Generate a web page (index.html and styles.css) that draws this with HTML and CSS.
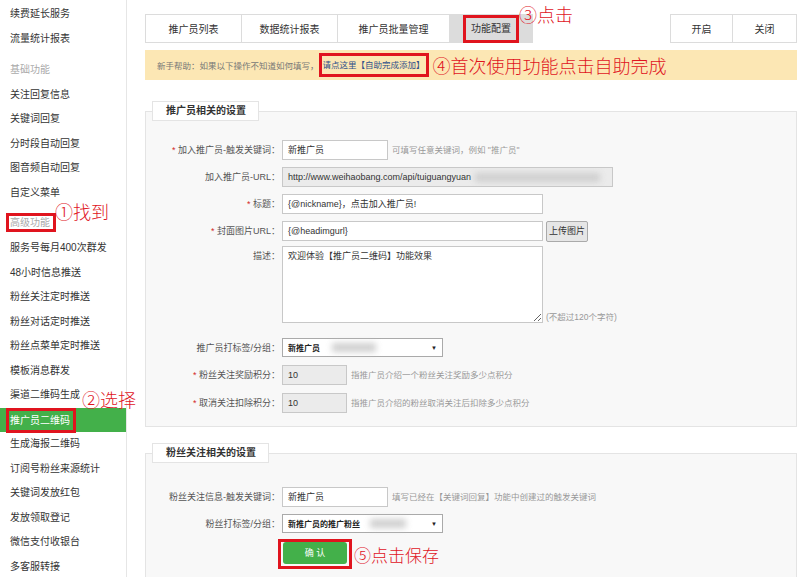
FILE: index.html
```html
<!DOCTYPE html>
<html>
<head>
  <meta charset="UTF-8">
  <title>推广员二维码 - 功能配置</title>
  <link rel="stylesheet" href="styles.css">
</head>
<body>
  <div class="page">
    <aside class="sidebar">
      <ul class="menu">
        <li>续费延长服务</li>
        <li>流量统计报表</li>
        <li class="group g1">基础功能</li>
        <li>关注回复信息</li>
        <li>关键词回复</li>
        <li>分时段自动回复</li>
        <li>图音频自动回复</li>
        <li>自定义菜单</li>
        <li class="group g2"><span class="mark mark-side">高级功能</span></li>
        <li class="g3">服务号每月400次群发</li>
        <li>48小时信息推送</li>
        <li>粉丝关注定时推送</li>
        <li>粉丝对话定时推送</li>
        <li>粉丝点菜单定时推送</li>
        <li>模板消息群发</li>
        <li>渠道二维码生成</li>
        <li class="active"><span class="mark mark-side">推广员二维码</span></li>
        <li>生成海报二维码</li>
        <li>订阅号粉丝来源统计</li>
        <li>关键词发放红包</li>
        <li>发放领取登记</li>
        <li>微信支付收银台</li>
        <li>多客服转接</li>
      </ul>
    </aside>

    <main class="main">
      <div class="topbar">
        <ul class="tabs">
          <li class="t1">推广员列表</li>
          <li class="t2">数据统计报表</li>
          <li class="t3">推广员批量管理</li>
          <li class="t4 on"><span class="mark mark-tab">功能配置</span></li>
        </ul>
        <div class="switch">
          <span class="sw sw-on">开启</span>
          <span class="sw sw-off">关闭</span>
        </div>
      </div>

      <div class="help">
        新手帮助：如果以下操作不知道如何填写，<a class="mark mark-link">请点这里【自助完成添加】</a>
        <span class="note">④首次使用功能点击自助完成</span>
      </div>

      <fieldset class="panel panel-a">
        <legend class="lg-a">推广员相关的设置</legend>
        <div class="row">
          <label><em>*</em> 加入推广员-触发关键词：</label>
          <div class="field w-s">新推广员</div>
          <span class="tip">可填写任意关键词，例如 "推广员"</span>
        </div>
        <div class="row">
          <label>加入推广员-URL：</label>
          <div class="field off w-l">http://www.weihaobang.com/api/tuiguangyuan<span class="blur blur-url"></span></div>
        </div>
        <div class="row">
          <label><em>*</em> 标题：</label>
          <div class="field w-m">{@nickname}，点击加入推广员!</div>
        </div>
        <div class="row r-upload">
          <label><em>*</em> 封面图片URL：</label>
          <div class="field w-m">{@headimgurl}</div>
          <span class="btn-up">上传图片</span>
        </div>
        <div class="row r-desc">
          <label>描述：</label>
          <textarea class="area">欢迎体验【推广员二维码】功能效果</textarea>
          <span class="tip tip-low">(不超过120个字符)</span>
        </div>
        <div class="row">
          <label>推广员打标签/分组：</label>
          <div class="pick"><b>新推广员</b><span class="blur blur-a"></span><i>▼</i></div>
        </div>
        <div class="row r-num">
          <label><em>*</em> 粉丝关注奖励积分：</label>
          <div class="field off w-n">10</div>
          <span class="tip">指推广员介绍一个粉丝关注奖励多少点积分</span>
        </div>
        <div class="row r-last">
          <label><em>*</em> 取消关注扣除积分：</label>
          <div class="field off w-n">10</div>
          <span class="tip">指推广员介绍的粉丝取消关注后扣除多少点积分</span>
        </div>
      </fieldset>

      <fieldset class="panel panel-b">
        <legend class="lg-b">粉丝关注相关的设置</legend>
        <div class="row">
          <label>粉丝关注信息-触发关键词：</label>
          <div class="field w-s">新推广员</div>
          <span class="tip">填写已经在【关键词回复】功能中创建过的触发关键词</span>
        </div>
        <div class="row r-tag">
          <label>粉丝打标签/分组：</label>
          <div class="pick"><b>新推广员的推广粉丝</b><span class="blur blur-b"></span><i>▼</i></div>
        </div>
        <div class="row r-save">
          <span class="mark mark-save"><span class="btn-ok">确 认</span></span>
          <span class="note note-save">⑤点击保存</span>
        </div>
      </fieldset>
    </main>

    <span class="ann ann-1">①找到</span>
    <span class="ann ann-2">②选择</span>
    <span class="ann ann-3">③点击</span>
  </div>
</body>
</html>
```

FILE: styles.css
```css
* { box-sizing: border-box; }
body { margin: 0; background: #fff; color: #333; font-family: "Liberation Sans", "Noto Sans CJK SC", sans-serif; }
.page { position: relative; display: flex; width: 800px; height: 577px; overflow: hidden; }

/* sidebar */
.sidebar { flex: none; width: 127px; padding-top: 2px; border-right: 1px solid #e6e6e6; }
.menu { list-style: none; margin: 0; padding: 0; }
.menu li { height: 24.5px; line-height: 24.5px; padding-left: 10px; font-size: 10px; color: #333; white-space: nowrap; }
.menu li.group { color: #aaa; }
.menu li.g1 { margin-top: 7px; }
.menu li.g2 { margin-top: 5px; }
.menu li.g3 { margin-top: 1.5px; }
.menu li.active { background: #43b04a; color: #fff; }
.mark { border: 3px solid #e0141e; }
.mark-side { display: inline-block; margin-left: -4px; padding: 0 3px 0 1px; line-height: 13px; vertical-align: middle; }
.menu li.active .mark-side { line-height: 19px; }

/* tabs */
.main { flex: 1; min-width: 0; padding: 14px 3px 0 18px; }
.topbar { display: flex; height: 29px; }
.tabs { display: flex; list-style: none; margin: 0; padding: 0; }
.tabs li { display: flex; align-items: center; justify-content: center; height: 29px; border: 1px solid #dcdcdc; border-left: none; background: #fff; font-size: 10px; color: #333; }
.tabs li.t1 { width: 97px; border-left: 1px solid #dcdcdc; }
.tabs li.t2 { width: 96px; }
.tabs li.t3 { width: 112px; }
.tabs li.t4 { width: 83px; }
.tabs li.on { background: #dcdcdc; }
.mark-tab { display: inline-block; width: 56px; height: 28px; line-height: 22px; text-align: center; }
.switch { display: flex; margin-left: auto; }
.sw { display: flex; align-items: center; justify-content: center; height: 29px; border: 1px solid #dcdcdc; font-size: 10px; }
.sw-on { width: 63px; }
.sw-off { width: 64px; border-left: none; }

/* help bar */
.help { display: flex; align-items: center; height: 30px; margin-top: 7px; padding-left: 12px; background: #fce7b4; font-size: 8.5px; color: #777; white-space: nowrap; }
.mark-link { display: inline-block; padding: 0 1px; line-height: 18px; color: #2f4f8a; }
.note { margin-left: 4px; font-family: "Noto Sans CJK SC", sans-serif; font-size: 18px; font-weight: 300; color: #e0141e; }

/* panels */
.panel { min-width: 0; margin: 21px 0 0; padding: 19px 0 13px; border: 1px solid #e4e4e4; background: #f8f8f8; }
.panel legend { height: 20px; margin-left: 6px; padding: 0 0 0 13px; border: 1px solid #e4e4e4; background: #fff; font-size: 10px; font-weight: bold; line-height: 18px; color: #333; white-space: nowrap; }
.lg-a { width: 107px; }
.lg-b { width: 117px; }
.panel-b { margin-top: 16px; padding-top: 24px; padding-bottom: 40px; }

.row { display: flex; align-items: flex-start; margin-bottom: 7px; }
.row label { flex: none; width: 134px; margin-right: 2px; font-size: 9px; line-height: 20px; text-align: right; color: #555; white-space: nowrap; }
.row label em { font-style: normal; color: #d42a2a; }
.r-upload { margin-bottom: 4px; }
.r-desc { margin-bottom: 15px; }
.r-num { margin-bottom: 8px; }
.r-last { margin-bottom: 0; }
.r-tag { margin-bottom: 5px; }

.field { height: 20px; padding: 0 5px; border: 1px solid #c8c8c8; background: #fff; font-size: 9px; line-height: 18px; color: #333; white-space: nowrap; overflow: hidden; }
.field.off { background: #ebebeb; }
.w-s { width: 106px; }
.w-l { width: 331px; }
.w-m { width: 261px; }
.w-n { width: 65px; }
.tip { margin-left: 4px; font-size: 8.5px; line-height: 20px; color: #999; white-space: nowrap; }
.tip-low { align-self: flex-end; margin-left: 3px; line-height: 12px; }
.btn-up { height: 21px; margin-left: 3px; padding: 0 2px; border: 1px solid #aaa; border-radius: 2px; background: #e6e6e6; font-size: 9px; line-height: 19px; color: #333; }
.area { width: 261px; height: 77px; margin: 0; padding: 3px 5px; border: 1px solid #c8c8c8; background: #fff; font-family: inherit; font-size: 9px; line-height: 13px; color: #333; resize: vertical; }

.pick { position: relative; display: flex; align-items: center; width: 161px; height: 19px; padding: 0 5px; border: 1px solid #aaa; background: #fff; font-size: 8px; white-space: nowrap; }
.pick b { color: #222; }
.pick i { margin-left: auto; font-style: normal; font-size: 6px; color: #222; }
.blur { display: inline-block; height: 9px; background: #cfcfcf; filter: blur(3px); vertical-align: middle; }
.blur-url { width: 125px; margin-left: 4px; }
.blur-a { width: 44px; margin-left: 12px; }
.blur-b { width: 36px; margin-left: 10px; }

.r-save { align-items: center; margin: 0; padding-left: 132px; }
.mark-save { display: inline-block; padding: 0 2px 2px; }
.btn-ok { display: block; width: 64px; height: 22px; border-radius: 3px; background: #43b04a; font-size: 9px; line-height: 22px; text-align: center; color: #fff; }
.note-save { margin-left: 2px; font-size: 17px; }

/* annotations */
.ann { position: absolute; font-family: "Noto Sans CJK SC", sans-serif; font-size: 18px; font-weight: 300; line-height: 1; color: #e0141e; white-space: nowrap; }
.ann-1 { left: 55px; top: 202px; }
.ann-2 { left: 82px; top: 390px; }
.ann-3 { left: 519px; top: 5px; }
```
